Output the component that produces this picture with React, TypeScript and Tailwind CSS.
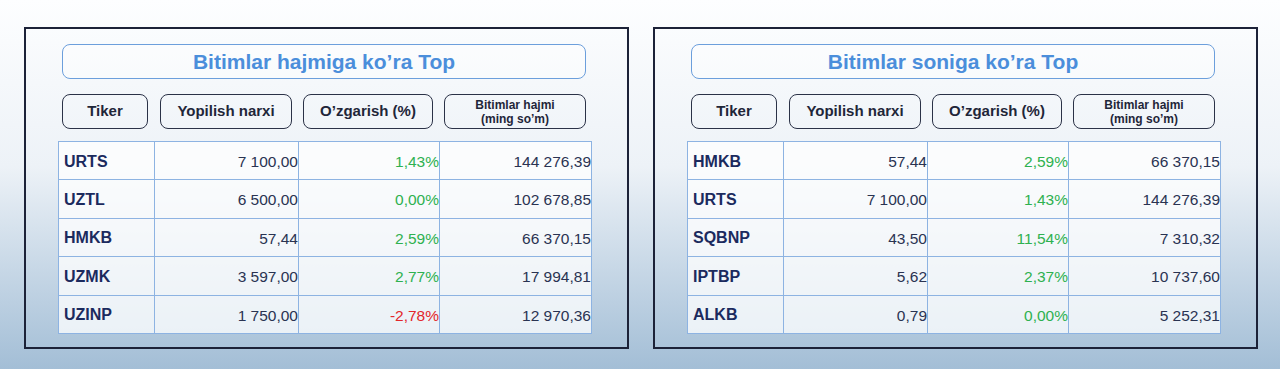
type Row = { t: string; p: string; c: string; v: string }

const left: Row[] = [
  { t: 'URTS', p: '7 100,00', c: '1,43%', v: '144 276,39' },
  { t: 'UZTL', p: '6 500,00', c: '0,00%', v: '102 678,85' },
  { t: 'HMKB', p: '57,44', c: '2,59%', v: '66 370,15' },
  { t: 'UZMK', p: '3 597,00', c: '2,77%', v: '17 994,81' },
  { t: 'UZINP', p: '1 750,00', c: '-2,78%', v: '12 970,36' },
]

const right: Row[] = [
  { t: 'HMKB', p: '57,44', c: '2,59%', v: '66 370,15' },
  { t: 'URTS', p: '7 100,00', c: '1,43%', v: '144 276,39' },
  { t: 'SQBNP', p: '43,50', c: '11,54%', v: '7 310,32' },
  { t: 'IPTBP', p: '5,62', c: '2,37%', v: '10 737,60' },
  { t: 'ALKB', p: '0,79', c: '0,00%', v: '5 252,31' },
]

function Panel({ title, rows }: { title: string; rows: Row[] }) {
  return (
    <section className="flex h-[322px] w-[605px] flex-col border-2 border-[#1c2238] px-[32px] pt-[15px]">
      {/* title */}
      <div className="ml-[4px] flex h-[35px] w-[524px] items-center justify-center rounded-[8px] border-[1.5px] border-[#6c9fdc] bg-white/40">
        <h2 className="text-[21px] font-bold text-[#4b8edb]">{title}</h2>
      </div>

      {/* column heads */}
      <div className="ml-[4px] mt-[15px] flex h-[35px] w-[524px] gap-[11px] text-[#1f2639]">
        <div className="flex w-[86px] items-center justify-center rounded-[8px] border-[1.5px] border-[#2b3247] text-[15px] font-bold">
          Tiker
        </div>
        <div className="ml-px flex w-[132px] items-center justify-center rounded-[8px] border-[1.5px] border-[#2b3247] text-[15px] font-bold">
          Yopilish narxi
        </div>
        <div className="flex w-[130px] items-center justify-center rounded-[8px] border-[1.5px] border-[#2b3247] text-[15px] font-bold">
          O’zgarish (%)
        </div>
        <div className="flex w-[142px] flex-col items-center justify-center rounded-[8px] border-[1.5px] border-[#2b3247] text-[12px] font-bold leading-[14px]">
          <span>Bitimlar hajmi</span>
          <span>(ming so’m)</span>
        </div>
      </div>

      {/* table */}
      <table className="mt-[12px] w-[533px] table-fixed border-collapse bg-white/75 text-[15.5px]">
        <colgroup>
          <col className="w-[96px]" />
          <col className="w-[144px]" />
          <col className="w-[141px]" />
          <col className="w-[152px]" />
        </colgroup>
        <tbody>
          {rows.map((r) => (
            <tr key={r.t} className="h-[38.4px]">
              <td className="border border-[#8db3e2] pl-[5px] pt-[2px] text-[16px] font-bold text-[#1b2a5e]">{r.t}</td>
              <td className="border border-[#8db3e2] pt-[2px] text-right text-[#2a3352]">{r.p}</td>
              <td
                className={
                  r.c.startsWith('-')
                    ? 'border border-[#8db3e2] pt-[2px] text-right text-[#e3262b]'
                    : 'border border-[#8db3e2] pt-[2px] text-right text-[#2eb150]'
                }
              >
                {r.c}
              </td>
              <td className="border border-[#8db3e2] pt-[2px] text-right text-[#2a3352]">{r.v}</td>
            </tr>
          ))}
        </tbody>
      </table>
    </section>
  )
}

export default function App() {
  return (
    <div
      className="flex h-[369px] w-[1280px] gap-[24px] bg-gradient-to-b from-[#fdfeff] via-[#edf2f7] via-45% to-[#a3bed6] pl-[24px] pt-[27px]"
      style={{ fontFamily: '"Liberation Sans", Arial, sans-serif' }}
    >
      <Panel title="Bitimlar hajmiga ko’ra Top" rows={left} />
      <Panel title="Bitimlar soniga ko’ra Top" rows={right} />
    </div>
  )
}
